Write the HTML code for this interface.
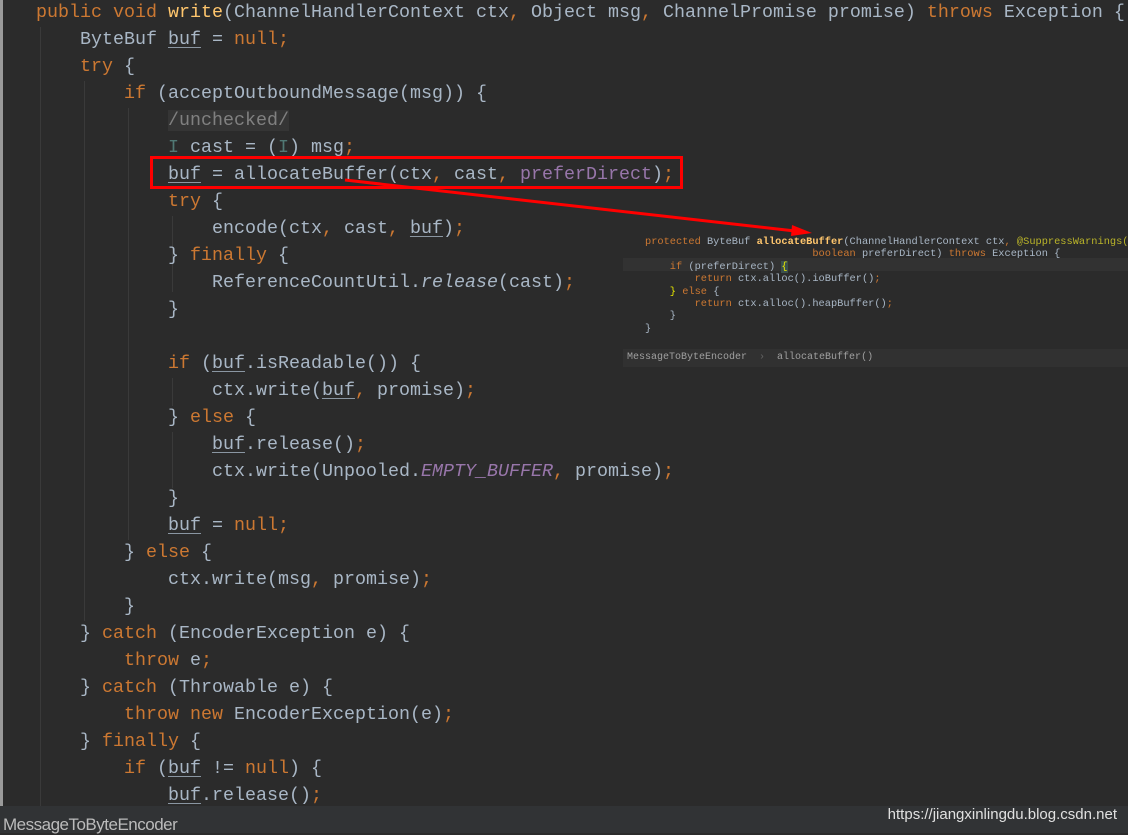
<!DOCTYPE html>
<html><head><meta charset="utf-8"><style>
html,body{margin:0;padding:0;}
body{width:1128px;height:833px;background:#2b2b2b;position:relative;overflow:hidden;font-family:"Liberation Mono","DejaVu Sans Mono",monospace;}
.lb{position:absolute;left:0;top:0;width:3px;height:833px;background:#9a9a9a;}
.g{position:absolute;width:1px;background:#3a3a3a;}
pre{margin:0;position:absolute;white-space:pre;}
#code{left:36px;top:-1px;font-size:18.33px;line-height:27px;color:#a9b7c6;}
.k{color:#cc7832}.m{color:#ffc66d}.p{color:#9876aa}.t{color:#507874}
.u{text-decoration:underline;text-decoration-color:#8a96a2;text-underline-offset:3px}
.c{color:#808080;background:#353535}
.i{font-style:italic;color:#9876aa}
.an{color:#bbb529}
#pop{left:645px;top:236px;font-size:10.33px;line-height:12.4px;color:#a9b7c6;}
.hl{position:absolute;left:623px;top:258px;width:505px;height:13px;background:#323232;}
.bc{position:absolute;left:623px;top:349px;width:505px;height:18px;background:#313131;color:#a0a0a0;font-size:10px;line-height:18px;}
.bar{position:absolute;left:0;top:806px;width:1128px;height:27px;background:#313335;}
.bar span{position:absolute;left:3px;top:9px;font-family:"Liberation Sans",sans-serif;font-size:17px;color:#bbbbbb;letter-spacing:-0.5px;}
.wm{position:absolute;right:11px;top:806px;font-family:"Liberation Sans",sans-serif;font-size:15px;color:#e0e0e0;}
</style></head><body>
<div class="lb"></div>
<div class="g" style="left:40px;top:27px;height:780px"></div>
<div class="g" style="left:84px;top:81px;height:540px"></div>
<div class="g" style="left:128px;top:108px;height:432px"></div>
<div class="g" style="left:172px;top:216px;height:76px"></div>
<div class="g" style="left:172px;top:378px;height:28px"></div>
<div class="g" style="left:172px;top:432px;height:56px"></div>
<div class="hl"></div>
<pre id="code"><span class="k">public void </span><span class="m">write</span>(ChannelHandlerContext ctx<span class="k">, </span>Object msg<span class="k">, </span>ChannelPromise promise) <span class="k">throws </span>Exception {
    ByteBuf <span class="u">buf</span> = <span class="k">null;</span>
    <span class="k">try </span>{
        <span class="k">if </span>(acceptOutboundMessage(msg)) {
            <span class="c">/unchecked/</span>
            <span class="t">I</span> cast = (<span class="t">I</span>) msg<span class="k">;</span>
            <span class="u">buf</span> = allocateBuffer(ctx<span class="k">, </span>cast<span class="k">, </span><span class="p">preferDirect</span>)<span class="k">;</span>
            <span class="k">try </span>{
                encode(ctx<span class="k">, </span>cast<span class="k">, </span><span class="u">buf</span>)<span class="k">;</span>
            } <span class="k">finally </span>{
                ReferenceCountUtil.<span style="font-style:italic">release</span>(cast)<span class="k">;</span>
            }

            <span class="k">if </span>(<span class="u">buf</span>.isReadable()) {
                ctx.write(<span class="u">buf</span><span class="k">, </span>promise)<span class="k">;</span>
            } <span class="k">else </span>{
                <span class="u">buf</span>.release()<span class="k">;</span>
                ctx.write(Unpooled.<span class="i">EMPTY_BUFFER</span><span class="k">, </span>promise)<span class="k">;</span>
            }
            <span class="u">buf</span> = <span class="k">null;</span>
        } <span class="k">else </span>{
            ctx.write(msg<span class="k">, </span>promise)<span class="k">;</span>
        }
    } <span class="k">catch </span>(EncoderException e) {
        <span class="k">throw </span>e<span class="k">;</span>
    } <span class="k">catch </span>(Throwable e) {
        <span class="k">throw new </span>EncoderException(e)<span class="k">;</span>
    } <span class="k">finally </span>{
        <span class="k">if </span>(<span class="u">buf</span> != <span class="k">null</span>) {
            <span class="u">buf</span>.release()<span class="k">;</span>
</pre>
<pre id="pop"><span class="k">protected </span>ByteBuf <span class="m" style="font-weight:bold">allocateBuffer</span>(ChannelHandlerContext ctx<span class="k">, </span><span class="an">@SuppressWarnings(</span>
                           <span class="k">boolean </span>preferDirect) <span class="k">throws </span>Exception {
    <span class="k">if </span>(preferDirect) <span style="color:#e8e800;background:#3b514d">{</span>
        <span class="k">return </span>ctx.alloc().ioBuffer()<span class="k">;</span>
    <span style="color:#e8e800">}</span> <span class="k">else </span>{
        <span class="k">return </span>ctx.alloc().heapBuffer()<span class="k">;</span>
    }
}</pre>
<div class="bc"><pre style="left:4px;top:0;font-size:10px;line-height:18px">MessageToByteEncoder  <span style="color:#666">›</span>  allocateBuffer()</pre></div>
<svg style="position:absolute;left:0;top:0" width="1128" height="833">
<rect x="151.5" y="157.5" width="530" height="30" fill="none" stroke="#ff0000" stroke-width="3"/>
<line x1="345" y1="180" x2="795" y2="231" stroke="#ff0000" stroke-width="3"/>
<polygon points="812,233 792,225 791,236" fill="#ff0000"/>
</svg>
<div class="bar"><span>MessageToByteEncoder</span></div>
<div class="wm">https://jiangxinlingdu.blog.csdn.net</div>
</body></html>
